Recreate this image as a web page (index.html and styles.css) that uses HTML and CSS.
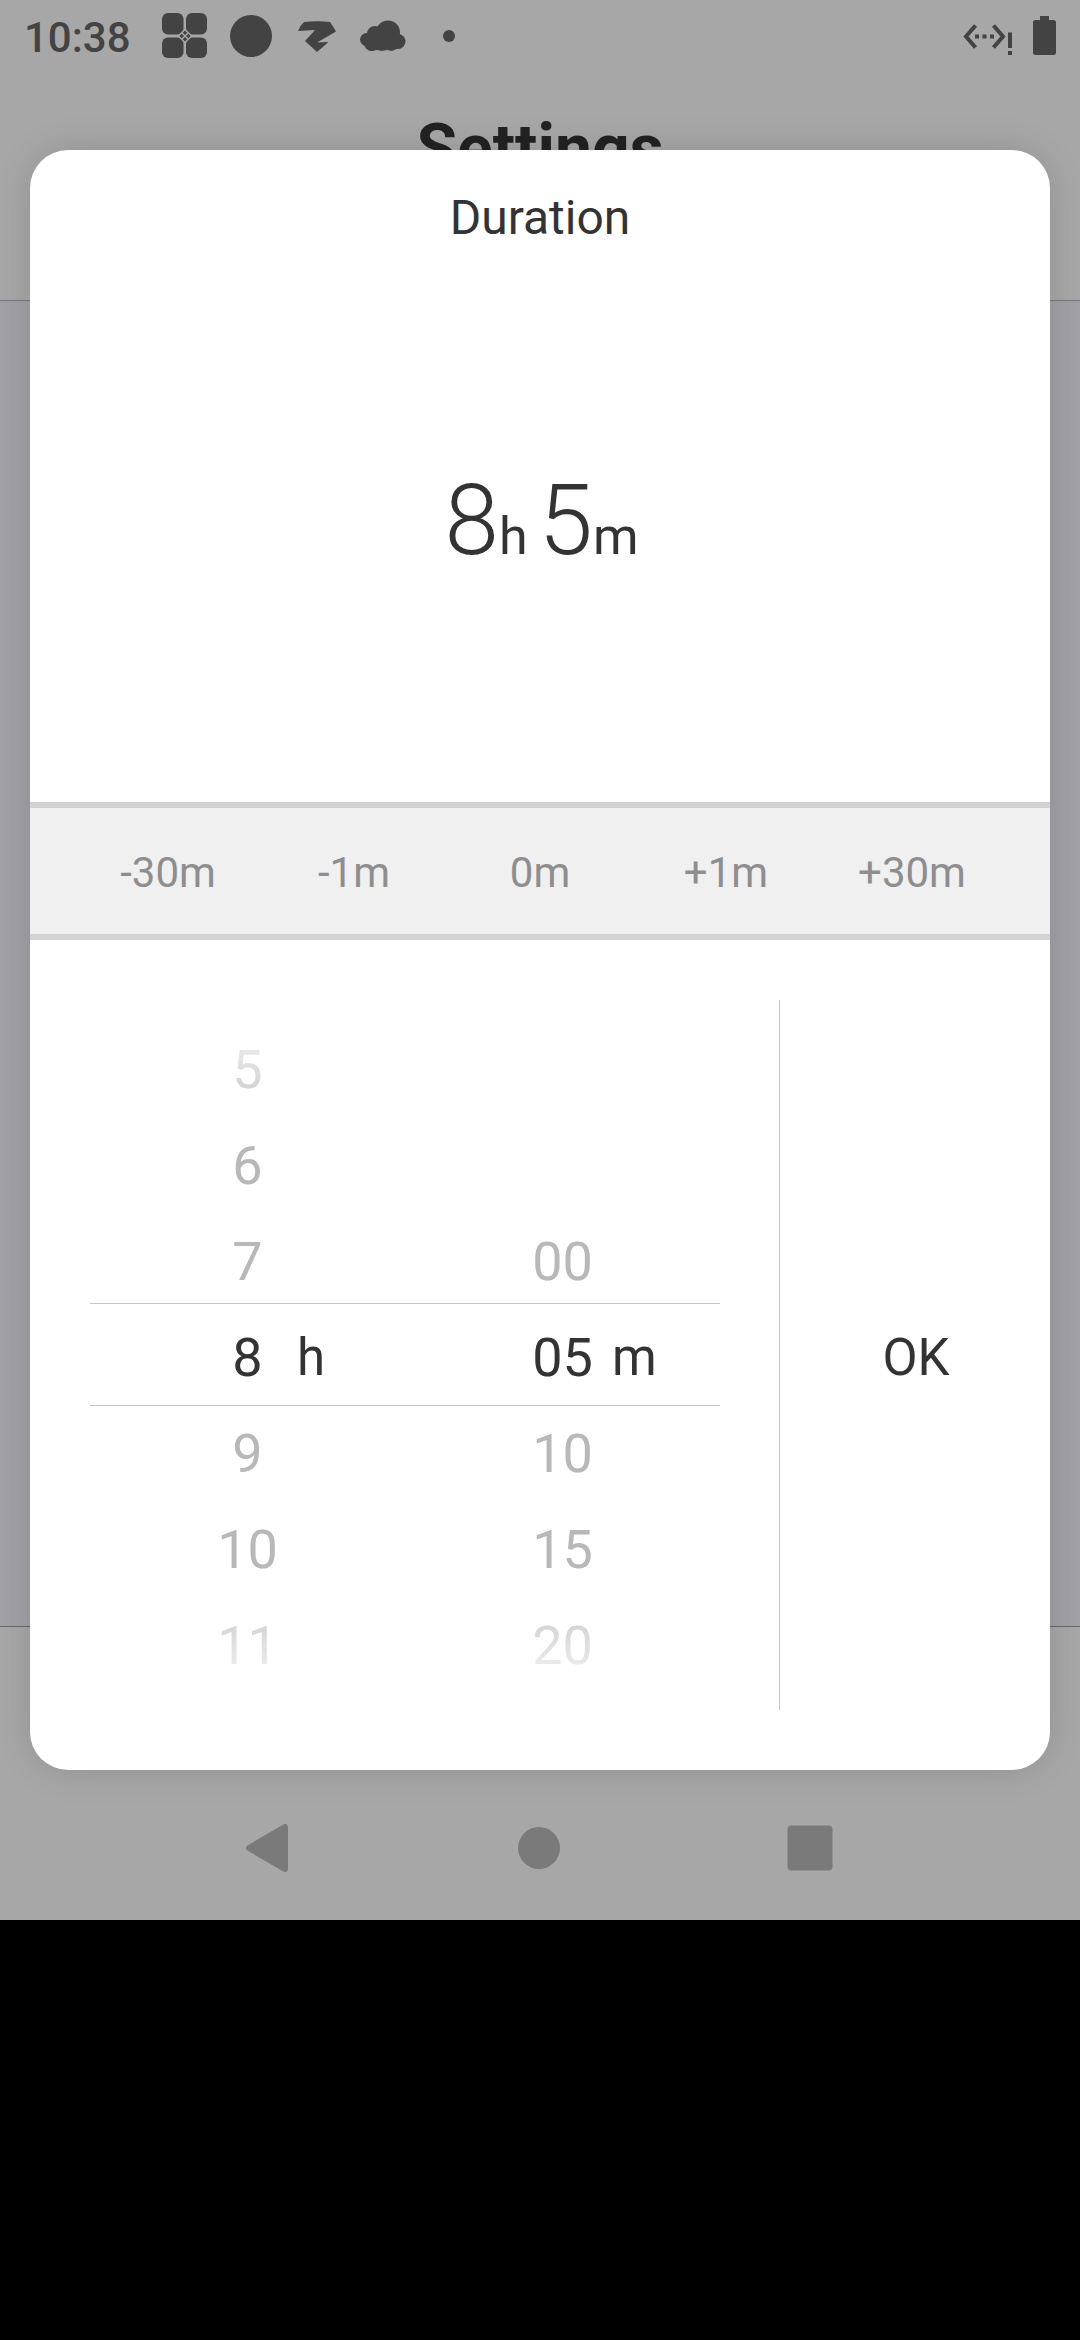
FILE: index.html
```html
<!DOCTYPE html>
<html lang="en">
<head>
<meta charset="utf-8">
<title>Settings - Duration</title>
<link rel="stylesheet" href="styles.css">
</head>
<body>
<div class="screen">
  <header class="header">
    <div class="status">
      <span class="clock">10:38</span>
      <svg class="notifications" width="300" height="72" viewBox="155 0 300 72">
        <rect x="162" y="13" width="21.500" height="21.500" rx="6"/>
        <rect x="186" y="13" width="21" height="21.500" rx="6"/>
        <rect x="162" y="37.500" width="21.500" height="20.500" rx="6"/>
        <rect x="186" y="37.500" width="21" height="20.500" rx="6"/>
        <path class="gap" d="M185 28.500l7.500 7.500-7.500 7.500-7.500-7.500z"/>
        <path d="M185 30.400l2.300 2.300-2.300 2.300-2.300-2.300zM185 37l2.300 2.300-2.300 2.300-2.300-2.300zM181.700 33.700L184 36l-2.300 2.300-2.300-2.300zM188.300 33.700l2.300 2.300-2.300 2.300L186 36z"/>
        <circle cx="251" cy="36" r="21"/>
        <path d="M304 22Q318 20.500 330 22Q333 26 336 31.500L317 42.500L328.500 42L317 52L305 41L315 30L298 31Q300 25.500 304 22Z"/>
        <circle cx="388" cy="32.500" r="12"/>
        <circle cx="375" cy="34" r="8"/>
        <circle cx="366.500" cy="39.500" r="6.500"/>
        <circle cx="398" cy="41.500" r="7.500"/>
        <circle cx="371.500" cy="43.500" r="7.500"/>
        <path d="M366 38h34l-1 10-7 3-5-1-5 1-5-1-6 1-5-4z"/>
        <circle cx="449" cy="36" r="6"/>
      </svg>
      <svg class="system" width="100" height="72" viewBox="960 0 100 72">
        <path class="line" d="M975.500 25.500L966 36.500L975.500 47.500M993.500 25.500L1003 36.500L993.500 47.500"/>
        <path d="M975 34.500h4v4h-4zM982.500 34.500h4v4h-4zM990 34.500h4v4h-4zM1008 32.500h4v15.500h-4zM1008 51h4v4h-4z"/>
        <path d="M1040 16h9v4h4.500q2.500 0 2.500 2.500v30q0 2.500-2.500 2.500h-18q-2.500 0-2.500-2.500v-30q0-2.500 2.500-2.500h4.500z"/>
      </svg>
    </div>
    <h1 class="page-title">Settings</h1>
  </header>
  <main class="content"></main>
  <footer class="footer">
    <nav class="nav">
      <svg width="46" height="52" viewBox="0 0 46 52"><path class="back" d="M5 26L41 5V47Z"/></svg>
      <svg width="42" height="42" viewBox="0 0 42 42"><circle cx="21" cy="21" r="21"/></svg>
      <svg width="46" height="46" viewBox="0 0 46 46"><rect x=".5" y=".5" width="45" height="45" rx="4"/></svg>
    </nav>
  </footer>
  <section class="dialog">
    <h2 class="dialog-title">Duration</h2>
    <div class="readout"><span class="num">8</span><span class="unit">h</span><span class="num second">5</span><span class="unit">m</span></div>
    <div class="quick">
      <span>-30m</span><span>-1m</span><span>0m</span><span>+1m</span><span>+30m</span>
    </div>
    <div class="bottom">
      <div class="picker">
        <div class="frame"></div>
        <div class="wheel">
          <div class="row"><span class="value">5</span></div>
          <div class="row"><span class="value">6</span></div>
          <div class="row"><span class="value">7</span></div>
          <div class="row selected"><span class="value">8</span><span class="label">h</span></div>
          <div class="row"><span class="value">9</span></div>
          <div class="row"><span class="value">10</span></div>
          <div class="row"><span class="value">11</span></div>
        </div>
        <div class="wheel">
          <div class="row"></div>
          <div class="row"></div>
          <div class="row"><span class="value">00</span></div>
          <div class="row selected"><span class="value">05</span><span class="label">m</span></div>
          <div class="row"><span class="value">10</span></div>
          <div class="row"><span class="value">15</span></div>
          <div class="row"><span class="value">20</span></div>
        </div>
      </div>
      <div class="ok">OK</div>
    </div>
  </section>
</div>
</body>
</html>
```

FILE: styles.css
```css
* { box-sizing: border-box; }
body {
  margin: 0;
  height: 2340px;
  background: #000;
  color: #333;
  font-family: Roboto, "Liberation Sans", sans-serif;
  overflow: hidden;
}
h1, h2 { margin: 0; }
svg { display: block; }
.screen {
  position: relative;
  display: flex;
  flex-direction: column;
  height: 1920px;
  background: #a7a7a7;
}
.header { height: 301px; border-bottom: 1px solid #777; }
.status {
  display: flex;
  height: 72px;
  padding: 0 20px 0 24px;
  fill: #434343;
  color: #434343;
}
.clock {
  width: 131px;
  font-size: 42px;
  font-weight: 500;
  line-height: 75px;
}
.gap { fill: #a7a7a7; }
.system { margin-left: auto; }
.line { fill: none; stroke: #434343; stroke-width: 4; }
.page-title {
  padding-top: 38px;
  font-size: 66px;
  font-weight: 700;
  line-height: 78px;
  text-align: center;
  color: #222;
}
.content { flex: 1; background: #a1a0a6; }
.footer { height: 294px; border-top: 1px solid #6b6b6b; padding-top: 149px; }
.nav {
  display: flex;
  align-items: center;
  justify-content: space-between;
  height: 144px;
  padding: 0 247px 0 244px;
  fill: #7a7a7a;
}
.back { stroke: #7a7a7a; stroke-width: 6; stroke-linejoin: round; }
.dialog {
  position: absolute;
  left: 30px;
  top: 150px;
  width: 1020px;
  height: 1620px;
  border-radius: 38px;
  background: #fff;
  box-shadow: 0 0 36px rgba(0, 0, 0, .13);
}
.dialog-title {
  font-size: 48px;
  font-weight: 400;
  line-height: 135px;
  text-align: center;
}
.readout {
  height: 517px;
  padding: 176px 0 0 3px;
  line-height: 120px;
  text-align: center;
}
.num { font-size: 98px; font-weight: 300; }
.unit { font-size: 52px; }
.second { margin-left: 11px; }
.quick {
  display: grid;
  grid-template-columns: repeat(5, 1fr);
  height: 138px;
  padding: 2px 45px 0;
  border: solid #d3d3d3;
  border-width: 6px 0;
  background: #f0f0f0;
  color: #8e8e8e;
  font-size: 42px;
  line-height: 126px;
  text-align: center;
}
.bottom { display: flex; height: 830px; padding: 60px 0 60px 60px; }
.picker {
  position: relative;
  display: grid;
  grid-template-columns: 315px 315px;
  width: 690px;
  border-right: 1px solid #c4c4c4;
}
.frame {
  position: absolute;
  left: 0;
  top: 303px;
  width: 630px;
  height: 103px;
  border: solid #c4c4c4;
  border-width: 1px 0;
}
.wheel {
  padding-top: 22px;
  mask-image: linear-gradient(transparent 5px, #000 140px, #000 570px, transparent 705px);
}
.row {
  display: grid;
  grid-template-columns: 1fr 61px 1fr;
  height: 96px;
  color: #b8b8b8;
  font-size: 54px;
  line-height: 96px;
}
.value { grid-column: 2; text-align: center; }
.label { padding-left: 19px; font-size: 51px; }
.selected { color: #333; }
.ok {
  flex: 1;
  padding: 5px 0 0 2px;
  font-size: 51px;
  line-height: 705px;
  text-align: center;
}
```
